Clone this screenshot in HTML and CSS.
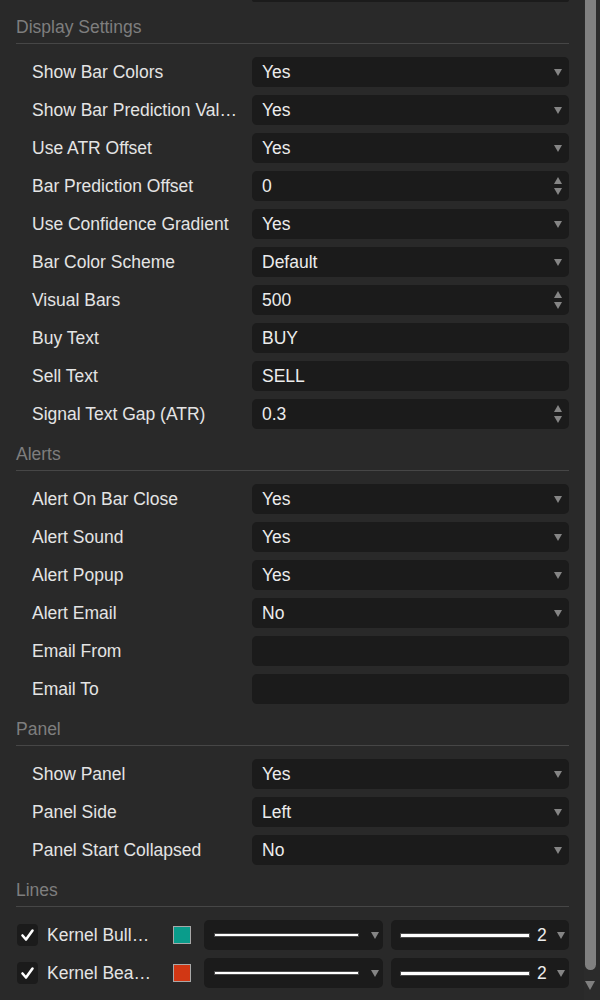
FILE: index.html
```html
<!DOCTYPE html>
<html lang="en">
<head>
<meta charset="utf-8">
<title>Indicator settings</title>
<link rel="stylesheet" href="styles.css">
</head>
<body>
<div class="window">
  <div class="panel">
    <div class="row stub-row"><span class="label"></span><div class="field stub"></div></div>

    <section class="group">
      <h2 class="group-title">Display Settings</h2>
      <div class="rows">
        <div class="row"><span class="label">Show Bar Colors</span><div class="field"><span class="value">Yes</span><i class="caret"></i></div></div>
        <div class="row"><span class="label">Show Bar Prediction Values</span><div class="field"><span class="value">Yes</span><i class="caret"></i></div></div>
        <div class="row"><span class="label">Use ATR Offset</span><div class="field"><span class="value">Yes</span><i class="caret"></i></div></div>
        <div class="row"><span class="label">Bar Prediction Offset</span><div class="field"><span class="value">0</span><i class="spin"><b class="up"></b><b class="down"></b></i></div></div>
        <div class="row"><span class="label">Use Confidence Gradient</span><div class="field"><span class="value">Yes</span><i class="caret"></i></div></div>
        <div class="row"><span class="label">Bar Color Scheme</span><div class="field"><span class="value">Default</span><i class="caret"></i></div></div>
        <div class="row"><span class="label">Visual Bars</span><div class="field"><span class="value">500</span><i class="spin"><b class="up"></b><b class="down"></b></i></div></div>
        <div class="row"><span class="label">Buy Text</span><div class="field"><span class="value">BUY</span></div></div>
        <div class="row"><span class="label">Sell Text</span><div class="field"><span class="value">SELL</span></div></div>
        <div class="row"><span class="label">Signal Text Gap (ATR)</span><div class="field"><span class="value">0.3</span><i class="spin"><b class="up"></b><b class="down"></b></i></div></div>
      </div>
    </section>

    <section class="group">
      <h2 class="group-title">Alerts</h2>
      <div class="rows">
        <div class="row"><span class="label">Alert On Bar Close</span><div class="field"><span class="value">Yes</span><i class="caret"></i></div></div>
        <div class="row"><span class="label">Alert Sound</span><div class="field"><span class="value">Yes</span><i class="caret"></i></div></div>
        <div class="row"><span class="label">Alert Popup</span><div class="field"><span class="value">Yes</span><i class="caret"></i></div></div>
        <div class="row"><span class="label">Alert Email</span><div class="field"><span class="value">No</span><i class="caret"></i></div></div>
        <div class="row"><span class="label">Email From</span><div class="field"><span class="value"></span></div></div>
        <div class="row"><span class="label">Email To</span><div class="field"><span class="value"></span></div></div>
      </div>
    </section>

    <section class="group">
      <h2 class="group-title">Panel</h2>
      <div class="rows">
        <div class="row"><span class="label">Show Panel</span><div class="field"><span class="value">Yes</span><i class="caret"></i></div></div>
        <div class="row"><span class="label">Panel Side</span><div class="field"><span class="value">Left</span><i class="caret"></i></div></div>
        <div class="row"><span class="label">Panel Start Collapsed</span><div class="field"><span class="value">No</span><i class="caret"></i></div></div>
      </div>
    </section>

    <section class="group">
      <h2 class="group-title">Lines</h2>
      <div class="rows">
        <div class="line-row">
          <span class="check"><svg viewBox="0 0 21 22" width="21" height="22"><path d="M5.5 11.5 L9 15.5 L15.5 6.5" fill="none" stroke="#ffffff" stroke-width="2.6" stroke-linecap="round" stroke-linejoin="round"/></svg></span>
          <span class="line-label">Kernel Bullish</span>
          <span class="swatch swatch-bull"></span>
          <div class="field style-field"><span class="stroke stroke-thin"></span><i class="caret"></i></div>
          <div class="field width-field"><span class="stroke stroke-thick"></span><span class="width-num">2</span><i class="caret"></i></div>
        </div>
        <div class="line-row">
          <span class="check"><svg viewBox="0 0 21 22" width="21" height="22"><path d="M5.5 11.5 L9 15.5 L15.5 6.5" fill="none" stroke="#ffffff" stroke-width="2.6" stroke-linecap="round" stroke-linejoin="round"/></svg></span>
          <span class="line-label">Kernel Bearish</span>
          <span class="swatch swatch-bear"></span>
          <div class="field style-field"><span class="stroke stroke-thin"></span><i class="caret"></i></div>
          <div class="field width-field"><span class="stroke stroke-thick"></span><span class="width-num">2</span><i class="caret"></i></div>
        </div>
      </div>
    </section>
  </div>

  <div class="scrollbar">
    <div class="thumb"></div>
    <div class="scroll-arrow"></div>
  </div>
</div>
</body>
</html>
```

FILE: styles.css
```css
* {
  box-sizing: border-box;
}

html, body {
  margin: 0;
  padding: 0;
  background: #292929;
  height: 1000px;
  overflow: hidden;
}

body {
  font-family: "Liberation Sans", Arial, sans-serif;
  font-size: 17.5px;
  color: #e4e4e4;
}

.window {
  display: flex;
  height: 1000px;
}

.panel {
  width: 584px;
  padding: 0 15px 0 16px;
}

/* bottom edge of the row scrolled off above */
.stub-row .field.stub {
  height: 2px;
  border-radius: 0 0 4px 4px;
}

.group-title {
  margin: 0 0 13px;
  padding: 15px 0 6px;
  font-size: 17.5px;
  font-weight: normal;
  line-height: 20px;
  color: #7e7e7e;
  border-bottom: 1px solid #464646;
}

.rows {
  display: flex;
  flex-direction: column;
  gap: 8px;
}

.row {
  display: grid;
  grid-template-columns: 236px 1fr;
  align-items: center;
}

.label {
  padding: 0 10px 0 16px;
  white-space: nowrap;
  overflow: hidden;
  text-overflow: ellipsis;
  line-height: 20px;
}

.field {
  position: relative;
  height: 30px;
  background: #1b1b1b;
  border-radius: 5px;
  display: flex;
  align-items: center;
  padding: 0 10px;
}

.value {
  flex: 1;
  line-height: 20px;
  color: #ececec;
}

.caret {
  width: 0;
  height: 0;
  border-left: 4px solid transparent;
  border-right: 4px solid transparent;
  border-top: 7px solid #858585;
  margin-right: -3px;
}

.spin {
  display: flex;
  flex-direction: column;
  gap: 4px;
  margin-right: -3px;
}

.spin b {
  display: block;
  width: 0;
  height: 0;
  border-left: 4px solid transparent;
  border-right: 4px solid transparent;
}

.spin .up {
  border-bottom: 7px solid #858585;
}

.spin .down {
  border-top: 7px solid #858585;
}

/* plot line rows */
.line-row {
  display: flex;
  align-items: center;
  height: 30px;
}

.check {
  width: 21px;
  height: 22px;
  margin-left: 1px;
  background: #1b1b1b;
  border-radius: 4px;
  display: flex;
}

.line-label {
  width: 105px;
  margin-left: 9px;
  white-space: nowrap;
  overflow: hidden;
  text-overflow: ellipsis;
  line-height: 20px;
}

.swatch {
  width: 18px;
  height: 18px;
  margin-left: 21px;
  border: 1px solid #a8a8a8;
}

.swatch-bull {
  background: #0a9c8b;
}

.swatch-bear {
  background: #d13714;
}

.style-field {
  width: 179px;
  margin-left: 13px;
  padding: 0 7px 0 11px;
}

.width-field {
  flex: 1;
  margin-left: 8px;
  padding: 0 7px 0 10px;
}

.stroke {
  display: block;
  background: #ffffff;
  box-shadow: 0 0 0 1px #4a4a4a;
}

.stroke-thin {
  width: 145px;
  height: 2px;
  margin-right: 13px;
}

.stroke-thick {
  width: 128px;
  height: 3px;
  margin-right: 8px;
}

.width-num {
  flex: 1;
  line-height: 20px;
  color: #ececec;
}

/* scrollbar column */
.scrollbar {
  width: 16px;
  background: #2b2b2b;
  display: flex;
  flex-direction: column;
  align-items: flex-start;
  padding-left: 1px;
}

.thumb {
  width: 11px;
  height: 970px;
  background: #808080;
  border-radius: 0 0 6px 6px;
}

.scroll-arrow {
  margin-top: 11px;
  width: 0;
  height: 0;
  border-left: 5.5px solid transparent;
  border-right: 5.5px solid transparent;
  border-top: 9px solid #808080;
}
```
